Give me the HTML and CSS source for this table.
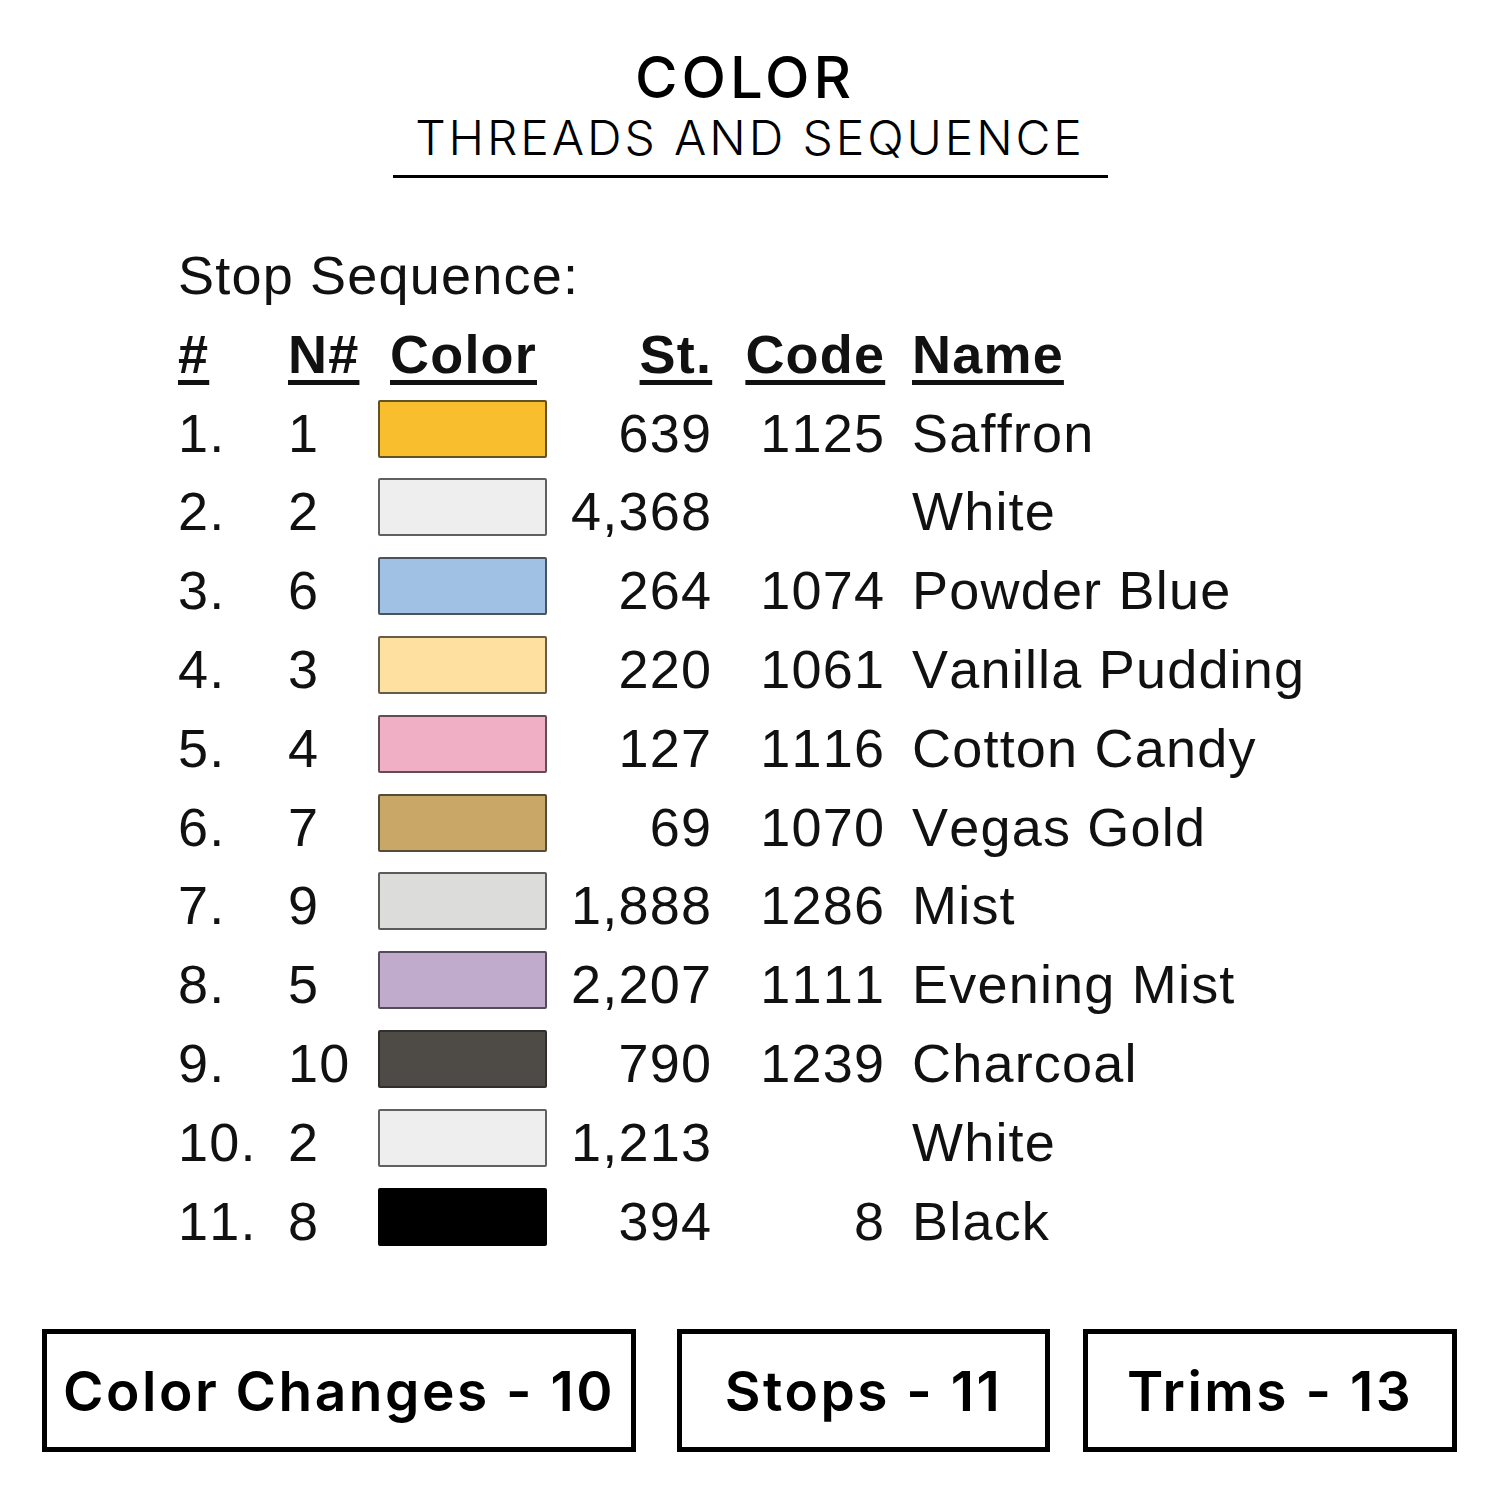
FILE: index.html
```html
<!DOCTYPE html>
<html lang="en">
<head>
<meta charset="utf-8">
<title>Color Threads and Sequence</title>
<link rel="stylesheet" href="styles.css">
</head>
<body>
<div class="page">
  <header class="title">
    <div class="title-main">COLOR</div>
    <div class="title-sub">THREADS AND SEQUENCE</div>
    <div class="title-rule"></div>
  </header>

  <section class="sequence">
    <div class="seq-label">Stop Sequence:</div>
    <div class="row head">
      <span class="c-num"><u>#</u></span>
      <span class="c-n"><u>N#</u></span>
      <span class="c-color"><u>Color</u></span>
      <span class="c-st"><u>St.</u></span>
      <span class="c-code"><u>Code</u></span>
      <span class="c-name"><u>Name</u></span>
    </div>
    <div class="row"><span class="c-num">1.</span><span class="c-n">1</span><span class="c-sw"><i class="sw saffron"></i></span><span class="c-st">639</span><span class="c-code">1125</span><span class="c-name">Saffron</span></div>
    <div class="row"><span class="c-num">2.</span><span class="c-n">2</span><span class="c-sw"><i class="sw white"></i></span><span class="c-st">4,368</span><span class="c-code"></span><span class="c-name">White</span></div>
    <div class="row"><span class="c-num">3.</span><span class="c-n">6</span><span class="c-sw"><i class="sw powder"></i></span><span class="c-st">264</span><span class="c-code">1074</span><span class="c-name">Powder Blue</span></div>
    <div class="row"><span class="c-num">4.</span><span class="c-n">3</span><span class="c-sw"><i class="sw vanilla"></i></span><span class="c-st">220</span><span class="c-code">1061</span><span class="c-name">Vanilla Pudding</span></div>
    <div class="row"><span class="c-num">5.</span><span class="c-n">4</span><span class="c-sw"><i class="sw candy"></i></span><span class="c-st">127</span><span class="c-code">1116</span><span class="c-name">Cotton Candy</span></div>
    <div class="row"><span class="c-num">6.</span><span class="c-n">7</span><span class="c-sw"><i class="sw gold"></i></span><span class="c-st">69</span><span class="c-code">1070</span><span class="c-name">Vegas Gold</span></div>
    <div class="row"><span class="c-num">7.</span><span class="c-n">9</span><span class="c-sw"><i class="sw mist"></i></span><span class="c-st">1,888</span><span class="c-code">1286</span><span class="c-name">Mist</span></div>
    <div class="row"><span class="c-num">8.</span><span class="c-n">5</span><span class="c-sw"><i class="sw evening"></i></span><span class="c-st">2,207</span><span class="c-code">1111</span><span class="c-name">Evening Mist</span></div>
    <div class="row"><span class="c-num">9.</span><span class="c-n">10</span><span class="c-sw"><i class="sw charcoal"></i></span><span class="c-st">790</span><span class="c-code">1239</span><span class="c-name">Charcoal</span></div>
    <div class="row"><span class="c-num">10.</span><span class="c-n">2</span><span class="c-sw"><i class="sw white"></i></span><span class="c-st">1,213</span><span class="c-code"></span><span class="c-name">White</span></div>
    <div class="row"><span class="c-num">11.</span><span class="c-n">8</span><span class="c-sw"><i class="sw black"></i></span><span class="c-st">394</span><span class="c-code">8</span><span class="c-name">Black</span></div>
  </section>

  <footer class="stats">
    <div class="stat s-changes">Color Changes - 10</div>
    <div class="stat s-stops">Stops - 11</div>
    <div class="stat s-trims">Trims - 13</div>
  </footer>
</div>
</body>
</html>
```

FILE: styles.css
```css
html, body {
  margin: 0;
  padding: 0;
  background: #ffffff;
}

.page {
  width: 1500px;
  height: 1500px;
  background: #ffffff;
  color: #000;
  overflow: hidden;
}

/* ---------- title ---------- */
.title {
  display: flex;
  flex-direction: column;
  align-items: center;
  padding-top: 48px;
  font-family: Inter, "Noto Sans", sans-serif;
}

.title-main {
  font-size: 58px;
  line-height: 58px;
  font-weight: 500;
  letter-spacing: 4px;
  margin-left: -10px;
}

.title-sub {
  margin-top: 8px;
  font-size: 48px;
  line-height: 48px;
  font-weight: 300;
  letter-spacing: 2.9px;
}

.title-rule {
  width: 715px;
  height: 3px;
  background: #000;
  margin-top: 13px;
}

/* ---------- sequence table ---------- */
.sequence {
  margin-top: 58px;
  margin-left: 178px;
  font-family: "Liberation Sans", Arial, sans-serif;
  font-size: 54px;
  letter-spacing: 1.2px;
  line-height: 79px;
  color: #111;
  font-kerning: none;
  font-variant-numeric: tabular-nums;
}

.seq-label {
  height: 78.8px;
}

.row {
  display: grid;
  grid-template-columns: 110px 90px 169px 164px 173px auto;
  height: 78.8px;
  align-items: start;
  white-space: nowrap;
}

.row.head {
  font-weight: 700;
}

.row.head u {
  text-decoration: underline;
  text-decoration-thickness: 5px;
  text-underline-offset: 7px;
}

.c-num,
.c-n {
  text-align: left;
}

.c-color {
  padding-left: 12px;
}

.c-st,
.c-code {
  text-align: right;
  margin-right: -1.2px;
}

.c-name {
  padding-left: 28px;
}

.sw {
  display: block;
  box-sizing: border-box;
  width: 169px;
  height: 58px;
  margin-top: 6px;
  border: 2px solid rgba(35, 35, 35, 0.7);
  border-radius: 2px;
}

.saffron  { background: #f8be2e; }
.white    { background: #eeeeee; }
.powder   { background: #a1c1e4; }
.vanilla  { background: #fee1a0; }
.candy    { background: #f0afc4; }
.gold     { background: #c9a767; }
.mist     { background: #dcddda; }
.evening  { background: #c1abcd; }
.charcoal { background: #4e4b46; }
.black    { background: #000000; border-color: #000; }

/* ---------- stats boxes ---------- */
.stats {
  display: flex;
  margin-top: 69px;
  margin-left: 42px;
  font-family: Inter, "Noto Sans", sans-serif;
}

.stat {
  box-sizing: border-box;
  height: 123px;
  border: 5px solid #000;
  display: flex;
  align-items: center;
  justify-content: center;
  font-size: 55px;
  font-weight: 600;
  letter-spacing: 2.5px;
  white-space: nowrap;
  color: #000;
}

.s-changes { width: 594px; }
.s-stops   { width: 373px; margin-left: 41px; }
.s-trims   { width: 374px; margin-left: 33px; }
```
